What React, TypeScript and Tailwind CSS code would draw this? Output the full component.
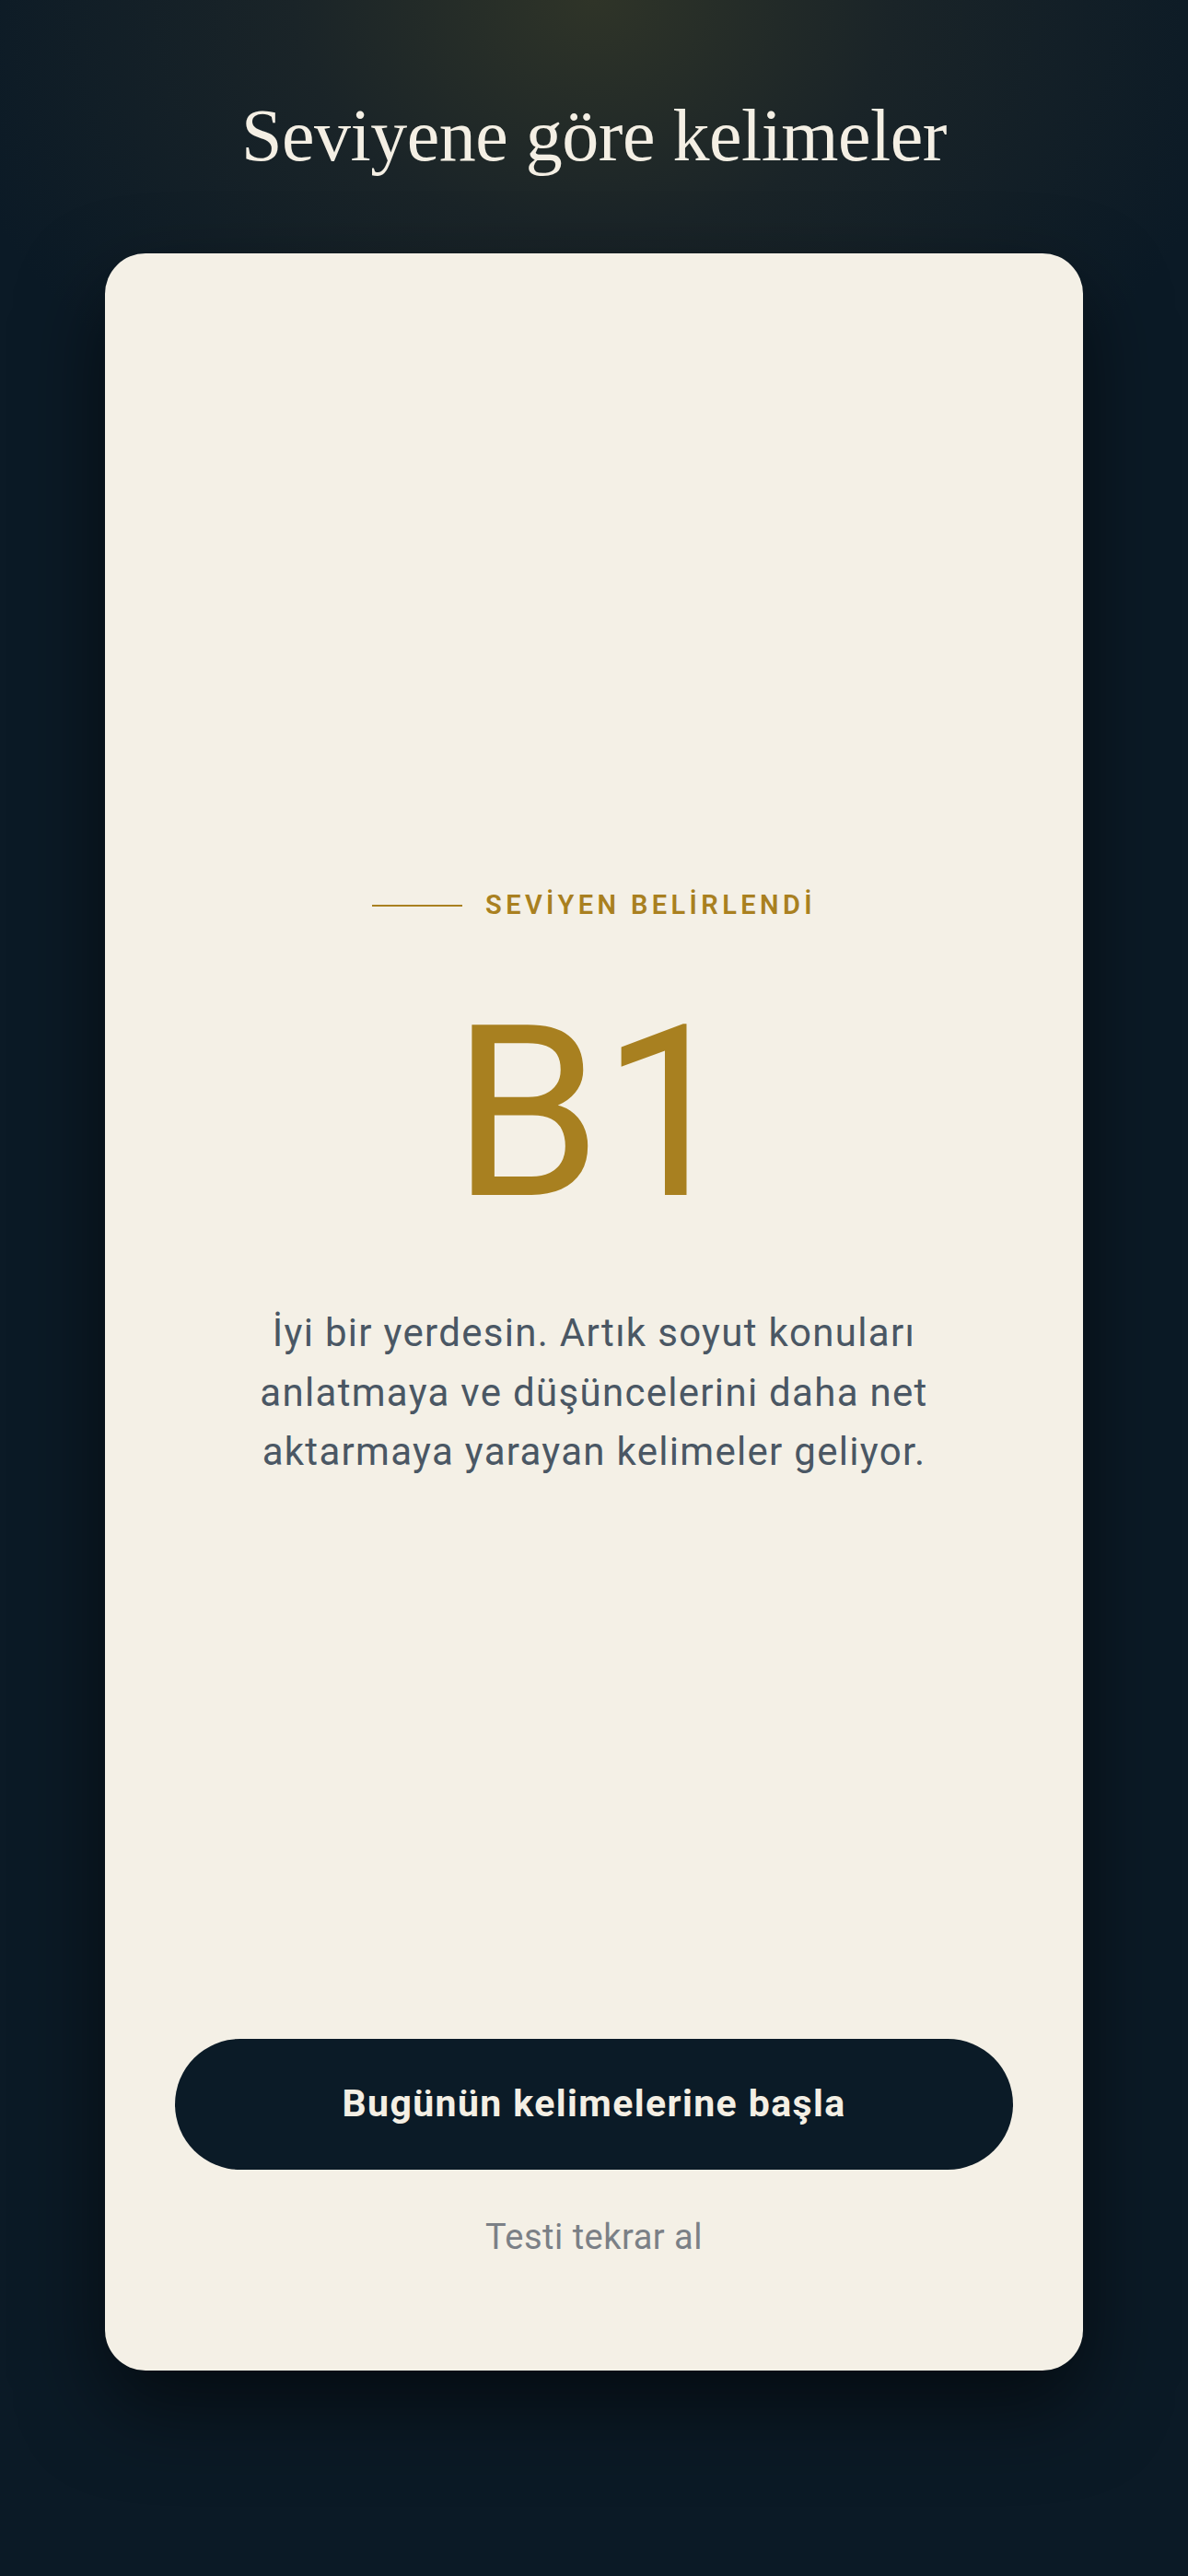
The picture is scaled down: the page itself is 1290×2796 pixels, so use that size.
import React from 'react';

export default function App() {
  return (
    <div className="min-h-[2796px] w-full bg-[#0b1a26] bg-[radial-gradient(ellipse_720px_560px_at_50%_0%,#2f3428_0%,#1a2428_45%,#0b1a26_100%)] flex flex-col items-center pt-[107px] font-['Roboto',sans-serif]">
      {/* Title */}
      <h1 className="font-['Liberation_Serif',serif] text-[80px] leading-none text-[#f4efe4] tracking-[-0.5px]">
        Seviyene göre kelimeler
      </h1>

      {/* Card */}
      <div className="mt-[88px] w-[1062px] h-[2298px] bg-[#f4f0e6] rounded-[44px] shadow-[0_40px_90px_rgba(0,0,0,0.55)] flex flex-col items-center px-[76px]">
        <div className="mt-[693px] flex items-center gap-[25px]">
          <div className="w-[98px] h-[2px] bg-[#a98020]" />
          <span className="text-[29px] leading-none font-semibold tracking-[4.4px] text-[#a98020]">
            SEVİYEN BELİRLENDİ
          </span>
        </div>

        <div className="mt-[81px] text-[260px] leading-none text-[#a88020]">B1</div>

        <p className="mt-[77px] text-[42px] leading-[64.5px] tracking-[1.3px] text-[#4a5764] text-center">
          İyi bir yerdesin. Artık soyut konuları
          <br />
          anlatmaya ve düşüncelerini daha net
          <br />
          aktarmaya yarayan kelimeler geliyor.
        </p>

        <div className="flex-1" />

        <button
          type="button"
          className="w-full h-[142px] rounded-full bg-[#0b1b27] text-[#f4efe4] text-[41px] tracking-[1.4px] font-bold"
        >
          Bugünün kelimelerine başla
        </button>
        <button
          type="button"
          className="mt-[54px] mb-[126px] text-[38px] leading-none tracking-[0.5px] text-[#7b8086]"
        >
          Testi tekrar al
        </button>
      </div>
    </div>
  );
}
